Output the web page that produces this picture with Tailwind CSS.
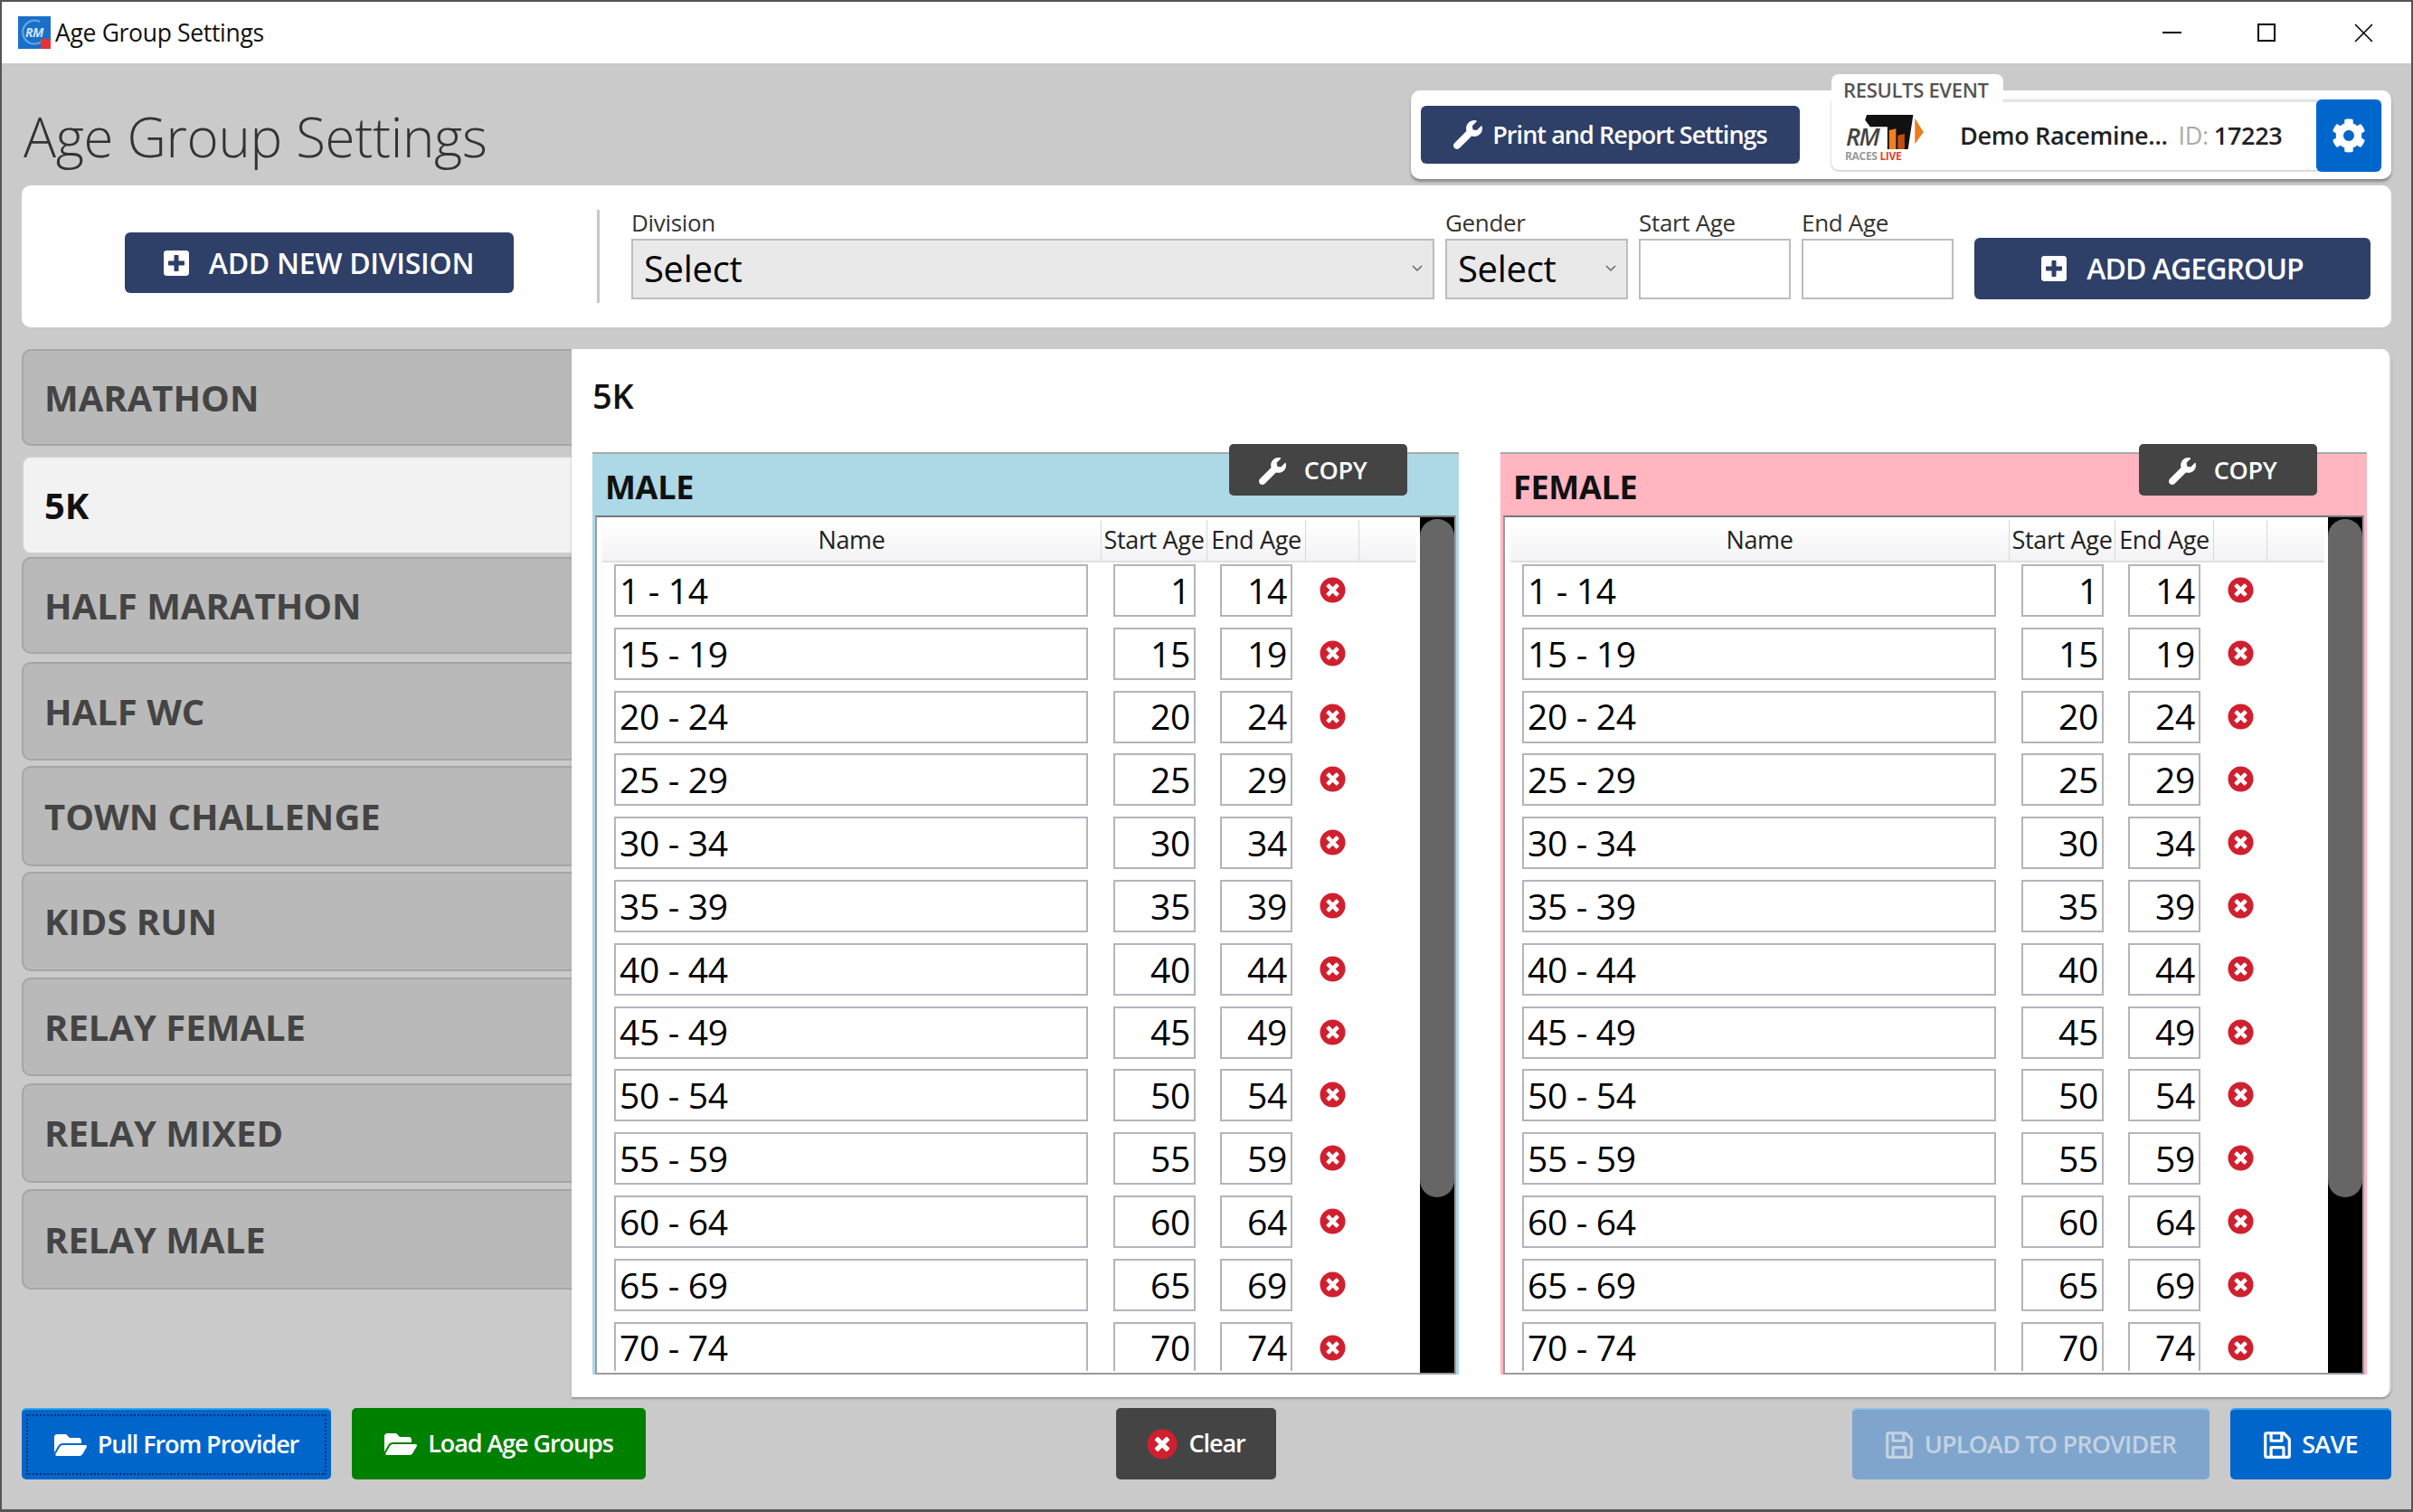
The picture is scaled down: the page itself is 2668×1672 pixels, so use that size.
<!DOCTYPE html>
<html lang="en">
<head>
<meta charset="UTF-8">
<title>Age Group Settings</title>
<script src="https://cdn.jsdelivr.net/npm/@tailwindcss/browser@4"></script>
</head>
<body class="bg-[#cacaca]">
<!-- icon sprites -->
<svg class="hidden">
  <symbol id="i-wrench" viewBox="0 0 512 512"><path fill="currentColor" d="M507.73 109.1c-2.24-9.03-13.54-12.09-20.12-5.51l-74.36 74.36-67.88-11.31-11.31-67.88 74.36-74.36c6.62-6.62 3.43-17.9-5.66-20.16-47.38-11.74-99.55.91-136.58 37.93-39.64 39.64-50.55 97.1-34.05 147.2L18.74 402.76c-24.99 24.99-24.99 65.51 0 90.5 24.99 24.99 65.51 24.99 90.5 0l213.21-213.21c50.12 16.71 107.47 5.68 147.37-34.22 37.07-37.07 49.7-89.32 37.91-136.73z"/></symbol>
  <symbol id="i-plus" viewBox="0 0 448 512"><path fill="currentColor" d="M400 32H48C21.5 32 0 53.5 0 80v352c0 26.5 21.5 48 48 48h352c26.5 0 48-21.5 48-48V80c0-26.5-21.5-48-48-48zm-32 252c0 6.6-5.4 12-12 12h-92v92c0 6.6-5.4 12-12 12h-56c-6.6 0-12-5.4-12-12v-92H92c-6.6 0-12-5.4-12-12v-56c0-6.6 5.4-12 12-12h92v-92c0-6.6 5.4-12 12-12h56c6.6 0 12 5.4 12 12v92h92c6.6 0 12 5.4 12 12v56z"/></symbol>
  <symbol id="i-x" viewBox="0 0 512 512"><circle cx="256" cy="256" r="150" fill="#fff"/><path fill="#d0202f" d="M256 8C119 8 8 119 8 256s111 248 248 248 248-111 248-248S393 8 256 8zm121.6 313.1c4.7 4.7 4.7 12.3 0 17L338 377.6c-4.7 4.7-12.3 4.7-17 0L256 312l-65.1 65.6c-4.7 4.7-12.3 4.7-17 0L134.4 338c-4.7-4.7-4.7-12.3 0-17l65.6-65-65.6-65.1c-4.7-4.7-4.7-12.3 0-17l39.6-39.6c4.7-4.7 12.3-4.7 17 0l65 65.7 65.1-65.6c4.7-4.7 12.3-4.7 17 0l39.6 39.6c4.7 4.7 4.7 12.3 0 17L312 256l65.6 65.1z"/></symbol>
  <symbol id="i-folder" viewBox="0 0 576 512"><path fill="currentColor" d="M572.694 292.093L500.27 416.248A63.997 63.997 0 0 1 444.989 448H45.025c-18.523 0-30.064-20.093-20.731-36.093l72.424-124.155A64 64 0 0 1 152 256h399.964c18.523 0 30.064 20.093 20.73 36.093zM152 224h328v-48c0-26.51-21.49-48-48-48H272l-64-64H48C21.49 64 0 85.49 0 112v278.046l69.077-118.418C86.214 242.25 117.989 224 152 224z"/></symbol>
  <symbol id="i-save" viewBox="0 0 448 512"><path fill="currentColor" fill-rule="evenodd" d="M48 32h270a48 48 0 0 1 34 14l82 84a48 48 0 0 1 14 34v268a48 48 0 0 1-48 48H48a48 48 0 0 1-48-48V80a48 48 0 0 1 48-48zm48 48H54a6 6 0 0 0-6 6v340a6 6 0 0 0 6 6h42V296a24 24 0 0 1 24-24h208a24 24 0 0 1 24 24v136h42a6 6 0 0 0 6-6V168l-78-84v100a24 24 0 0 1-24 24H120a24 24 0 0 1-24-24zm48 0v80h128V80zm0 240v112h160V320z"/></symbol>
  <symbol id="i-cog" viewBox="0 0 512 512"><path fill="currentColor" d="M487.4 315.7l-42.6-24.6c4.3-23.2 4.3-47 0-70.2l42.6-24.6c4.9-2.8 7.1-8.6 5.5-14-11.1-35.6-30-67.8-54.7-94.6-3.8-4.1-10-5.1-14.8-2.3L380.8 110c-17.9-15.4-38.5-27.3-60.8-35.1V25.8c0-5.6-3.9-10.5-9.4-11.7-36.7-8.2-74.3-7.8-109.2 0-5.5 1.2-9.4 6.1-9.4 11.7V75c-22.2 7.9-42.8 19.8-60.8 35.1L88.7 85.5c-4.9-2.8-11-1.9-14.8 2.3-24.7 26.7-43.6 58.9-54.7 94.6-1.7 5.4.6 11.2 5.5 14L67.3 221c-4.3 23.2-4.3 47 0 70.2l-42.6 24.6c-4.9 2.8-7.1 8.6-5.5 14 11.1 35.6 30 67.8 54.7 94.6 3.8 4.1 10 5.1 14.8 2.3l42.6-24.6c17.9 15.4 38.5 27.3 60.8 35.1v49.2c0 5.6 3.9 10.5 9.4 11.7 36.7 8.2 74.3 7.8 109.2 0 5.5-1.2 9.4-6.1 9.4-11.7v-49.2c22.2-7.9 42.8-19.8 60.8-35.1l42.6 24.6c4.9 2.8 11 1.9 14.8-2.3 24.7-26.7 43.6-58.9 54.7-94.6 1.5-5.5-.7-11.3-5.6-14.1zM256 336c-44.1 0-80-35.9-80-80s35.9-80 80-80 80 35.9 80 80-35.9 80-80 80z"/></symbol>
</svg>

<div class="w-[2668px] h-[1672px] flex flex-col border-x-2 border-t-2 border-b-[3px] border-[#555555] font-['Open_Sans',sans-serif] tracking-[-0.02em] text-black overflow-hidden">

  <!-- title bar -->
  <div class="h-[68px] shrink-0 bg-white flex items-center pl-[18px]">
    <div class="w-[36px] h-[36px] relative bg-[#1a6fc9] flex items-center justify-center overflow-hidden">
      <svg class="absolute inset-0 w-[36px] h-[36px]" viewBox="0 0 36 36"><path d="M24 6A13 13 0 1 0 26 28" fill="none" stroke="#6aa8e0" stroke-width="2"/></svg>
      <span class="relative text-[#cfe3f7] text-[14px] font-bold italic leading-none">RM</span>
      <span class="absolute right-0 bottom-0 w-[11px] h-[11px] bg-[#e53238]"></span>
    </div>
    <span class="ml-[5px] text-[26.5px] text-[#111] leading-none">Age Group Settings</span>
    <div class="ml-auto flex items-center pr-[42px] text-[#111]">
      <span class="w-[21px] h-[2px] bg-black"></span>
      <span class="ml-[84px] w-[20px] h-[20px] border-2 border-black"></span>
      <svg class="ml-[87px] w-[21px] h-[21px]" viewBox="0 0 20 20"><path d="M1 1l18 18M19 1L1 19" stroke="#000" stroke-width="1.5"/></svg>
    </div>
  </div>

  <!-- page header -->
  <div class="h-[135px] shrink-0 flex justify-between pl-[24px] pr-[22px]">
    <h1 class="mt-[51px] text-[60px] font-light leading-none text-[#333]">Age Group Settings</h1>
    <div class="mt-[30px] w-[1084px] h-[98px] bg-white rounded-[10px] shadow-[0_3px_3px_#8a8a8a] flex items-center pl-[11px] pr-[4px]">
      <button class="w-[419px] h-[64px] bg-[#2e3f68] rounded-[6px] text-white text-[27px] tracking-[-0.035em] font-semibold flex items-center justify-center gap-[11px]">
        <svg class="w-[32px] h-[32px]"><use href="#i-wrench"/></svg>Print and Report Settings
      </button>
      <div class="relative ml-[35px] w-[608px] h-[78px] rounded-b-[8px] border-t-[3px] border-[#e4e4e4] flex items-center shadow-[0_1px_3px_#bbb]">
        <div class="absolute left-0 -top-[31px] w-[190px] h-[34px] bg-white rounded-t-[8px] text-[#555] text-[22px] font-semibold pl-[13px] leading-[34px]">RESULTS EVENT</div>
        <!-- logo -->
        <div class="relative w-[100px] h-[56px] ml-[14px] shrink-0">
          <svg class="absolute left-0 top-[4px] w-[90px] h-[38px]" viewBox="0 0 90 40"><polygon points="24,0 78,0 72,40 48,40 48,14 28,14 22,6" fill="#111"/><polygon points="50,18 58,16 58,40 50,40" fill="#f08020"/><polygon points="60,24 68,22 68,40 60,40" fill="#c05010"/><polygon points="80,4 90,20 80,34" fill="#ef7a1a"/></svg>
          <span class="absolute left-[2px] top-[13px] text-[27px] italic font-semibold leading-[30px] text-[#444] tracking-tighter">RM</span>
          <span class="absolute left-[1px] top-[43px] text-[12px] font-bold leading-[14px] text-[#999] whitespace-nowrap">RACES <span class="text-[#e8402a]">LIVE</span></span>
        </div>
        <span class="ml-[28px] text-[27px] font-semibold text-[#222] whitespace-nowrap">Demo Racemine...</span>
        <span class="ml-[12px] text-[27px] text-[#aaa] whitespace-nowrap">ID:</span>
        <span class="ml-[6px] text-[27px] font-semibold text-[#222]">17223</span>
        <button class="absolute right-0 -top-[3px] w-[72px] h-[80px] bg-[#0066cc] rounded-[6px] flex items-center justify-center text-white">
          <svg class="w-[38px] h-[38px]"><use href="#i-cog"/></svg>
        </button>
      </div>
    </div>
  </div>

  <!-- add toolbar -->
  <div class="h-[157px] shrink-0 mx-[22px] bg-white rounded-[10px] flex items-center relative">
    <div class="w-[636px] flex justify-center">
      <button class="ml-[21px] mt-[14px] w-[430px] h-[67px] bg-[#2e3f68] rounded-[6px] text-white text-[32px] font-semibold flex items-center justify-center gap-[22px]">
        <svg class="w-[28px] h-[32px]"><use href="#i-plus"/></svg>ADD NEW DIVISION
      </button>
    </div>
    <div class="w-[3px] h-[103px] bg-[#c8c8c8]"></div>
    <div class="flex items-end h-[110px] ml-[35px] -mt-[16px]">
      <label class="block w-[888px]">
        <span class="block text-[26px] leading-[36px] text-[#333]">Division</span>
        <span class="relative block">
          <select class="w-full h-[67px] appearance-none bg-[#e9e9e9] border-2 border-[#bdbdbd] pl-[12px] text-[40px] font-medium font-['Open_Sans',sans-serif]"><option>Select</option></select>
          <svg class="absolute right-[13px] top-[29px] w-[12px] h-[8px]" viewBox="0 0 12 8"><path d="M1 1l5 5 5-5" fill="none" stroke="#666" stroke-width="1.5"/></svg>
        </span>
      </label>
      <label class="block w-[202px] ml-[12px]">
        <span class="block text-[26px] leading-[36px] text-[#333]">Gender</span>
        <span class="relative block">
          <select class="w-full h-[67px] appearance-none bg-[#e9e9e9] border-2 border-[#bdbdbd] pl-[12px] text-[40px] font-medium font-['Open_Sans',sans-serif]"><option>Select</option></select>
          <svg class="absolute right-[13px] top-[29px] w-[12px] h-[8px]" viewBox="0 0 12 8"><path d="M1 1l5 5 5-5" fill="none" stroke="#666" stroke-width="1.5"/></svg>
        </span>
      </label>
      <label class="block w-[168px] ml-[12px]">
        <span class="block text-[26px] leading-[36px] text-[#333]">Start Age</span>
        <input class="block w-full h-[67px] bg-white border-2 border-[#bdbdbd]">
      </label>
      <label class="block w-[168px] ml-[12px]">
        <span class="block text-[26px] leading-[36px] text-[#333]">End Age</span>
        <input class="block w-full h-[67px] bg-white border-2 border-[#bdbdbd]">
      </label>
      <button class="ml-[23px] w-[438px] h-[68px] bg-[#2e3f68] rounded-[6px] text-white text-[32px] tracking-[-0.03em] font-semibold flex items-center justify-center gap-[22px]">
        <svg class="w-[28px] h-[32px]"><use href="#i-plus"/></svg>ADD AGEGROUP
      </button>
    </div>
  </div>

  <!-- divisions + age groups -->
  <div class="h-[1159px] shrink-0 mt-[24px] ml-[22px] mr-[22px] flex">
    <div id="tabs" class="w-[608px] shrink-0 flex flex-col"></div>
    <div class="flex-1 bg-white rounded-tr-[10px] rounded-br-[10px] border-r-2 border-[#d4d4d4] shadow-[0_2px_2px_#999] pl-[23px]">
      <div class="h-[114px] pt-[28px] text-[38px] font-semibold leading-[46px] text-[#111]">5K</div>
      <div class="flex gap-[46px]">
        <section id="male" class="w-[958px]"></section>
        <section id="female" class="w-[958px]"></section>
      </div>
    </div>
  </div>

  <!-- footer buttons -->
  <div class="mt-[12px] mx-[22px] h-[79px] flex items-stretch">
    <button class="w-[342px] bg-[#0066cc] border-t-2 border-[#35a5e8] rounded-[5px] p-[5px] text-white text-[27px] tracking-[-0.04em] font-semibold">
      <span class="h-full border-2 border-dotted border-[#0b2f66] flex items-center justify-center gap-[12px]"><svg class="w-[36px] h-[32px]"><use href="#i-folder"/></svg>Pull From Provider</span>
    </button>
    <button class="ml-[23px] w-[325px] bg-[#008000] rounded-[5px] text-white text-[27px] tracking-[-0.04em] font-semibold flex items-center justify-center gap-[12px]">
      <svg class="w-[36px] h-[32px]"><use href="#i-folder"/></svg>Load Age Groups
    </button>
    <button class="ml-[520px] w-[177px] bg-[#444444] rounded-[5px] text-white text-[27px] tracking-[-0.04em] font-semibold flex items-center justify-center gap-[12px]">
      <svg class="w-[34px] h-[34px]"><use href="#i-x"/></svg>Clear
    </button>
    <button class="ml-auto w-[395px] bg-[#7fa5cd] border-t-2 border-[#8fc0e4] rounded-[5px] text-[#c4d2e2] text-[27px] tracking-[-0.03em] font-semibold flex items-center justify-center gap-[13px]">
      <svg class="w-[30px] h-[34px]"><use href="#i-save"/></svg>UPLOAD TO PROVIDER
    </button>
    <button class="ml-[23px] w-[178px] bg-[#0066cc] border-t-2 border-[#35a5e8] rounded-[5px] text-white text-[27px] tracking-[-0.03em] font-semibold flex items-center justify-center gap-[12px]">
      <svg class="w-[30px] h-[34px]"><use href="#i-save"/></svg>SAVE
    </button>
  </div>
</div>

<script>
  // division tabs down the left side
  const divisions = [
    ['MARATHON', 107, 11], ['5K', 109, 3], ['HALF MARATHON', 107, 9], ['HALF WC', 109, 6],
    ['TOWN CHALLENGE', 111, 6], ['KIDS RUN', 110, 7], ['RELAY FEMALE', 109, 8],
    ['RELAY MIXED', 110, 7], ['RELAY MALE', 111, 0]
  ];
  document.getElementById('tabs').innerHTML = divisions.map(([name, height, gap]) => {
    const tone = name === '5K'
      ? 'bg-[#f2f2f2] text-[#111] border-[#cfcfcf]'
      : 'bg-[#b9b9b9] text-[#444444] border-[#a5a5a5]';
    return `<div class="shrink-0 ${tone} border-l-2 border-t-2 border-b-2 rounded-l-[10px] pl-[23px] flex items-center text-[40px] tracking-normal font-bold" style="height:${height}px;margin-bottom:${gap}px">${name}</div>`;
  }).join('');

  // age group table, same for both genders
  const groups = [[1,14],[15,19],[20,24],[25,29],[30,34],[35,39],[40,44],[45,49],[50,54],[55,59],[60,64],[65,69],[70,74]];
  const row = ([from, to]) => `
    <div class="h-[69.8px] shrink-0 flex items-start">
      <input value="${from} - ${to}" readonly class="ml-[19px] w-[524px] h-[58px] px-[4px] bg-white border-2 border-[#b4b4bc] text-[39px] font-medium text-black">
      <input value="${from}" readonly class="ml-[28px] w-[91px] h-[58px] px-[4px] text-right bg-white border-2 border-[#b4b4bc] text-[39px] font-medium text-black">
      <input value="${to}" readonly class="ml-[27px] w-[80px] h-[58px] px-[4px] text-right bg-white border-2 border-[#b4b4bc] text-[39px] font-medium text-black">
      <svg class="ml-[30px] mt-[14px] w-[29px] h-[29px]"><use href="#i-x"/></svg>
    </div>`;
  const panel = (title, sectionBg, copyOffset) => `
    <div class="${sectionBg}">
      <div class="relative h-[70px] border-t-2 border-[#a9a9a9] flex items-center pl-[14px] pt-[6px] text-[36px] font-bold text-[#111]">
        ${title}
        <button class="absolute top-[-11px] w-[197px] h-[57px] pr-[12px] pt-[2px] bg-[#444444] rounded-[5px] text-white text-[27px] font-semibold flex items-center justify-center gap-[20px]" style="left:${copyOffset}px">
          <svg class="w-[30px] h-[30px]"><use href="#i-wrench"/></svg>COPY
        </button>
      </div>
      <div class="h-[950px] mx-[3px] border-2 border-[#9a9aa2] border-t-[#777] bg-white flex overflow-hidden">
        <div class="flex-1 min-w-0 pt-[3px]">
          <div class="h-[47px] ml-[6px] mr-[4px] flex border-b-2 border-[#e0e0e0] bg-gradient-to-b from-white to-[#f3f3f6] text-[27px] text-[#222] leading-[43px] text-center">
            <div class="w-[552px] border-r border-[#d8d8d8]">Name</div>
            <div class="w-[117px] border-r border-[#d8d8d8] whitespace-nowrap">Start Age</div>
            <div class="w-[109px] border-r border-[#d8d8d8] whitespace-nowrap">End Age</div>
            <div class="w-[59px] border-r border-[#d8d8d8]"></div>
          </div>
          <div class="h-[894px] pt-[2px] overflow-hidden flex flex-col">${groups.map(row).join('')}</div>
        </div>
        <div class="w-[38px] shrink-0 bg-black pt-[2px]">
          <div class="h-[750px] bg-[#666666] rounded-[19px]"></div>
        </div>
      </div>
    </div>`;
  document.getElementById('male').innerHTML = panel('MALE', 'bg-[#add8e6]', 704);
  document.getElementById('female').innerHTML = panel('FEMALE', 'bg-[#ffb6c1]', 706);
</script>
</body>
</html>
